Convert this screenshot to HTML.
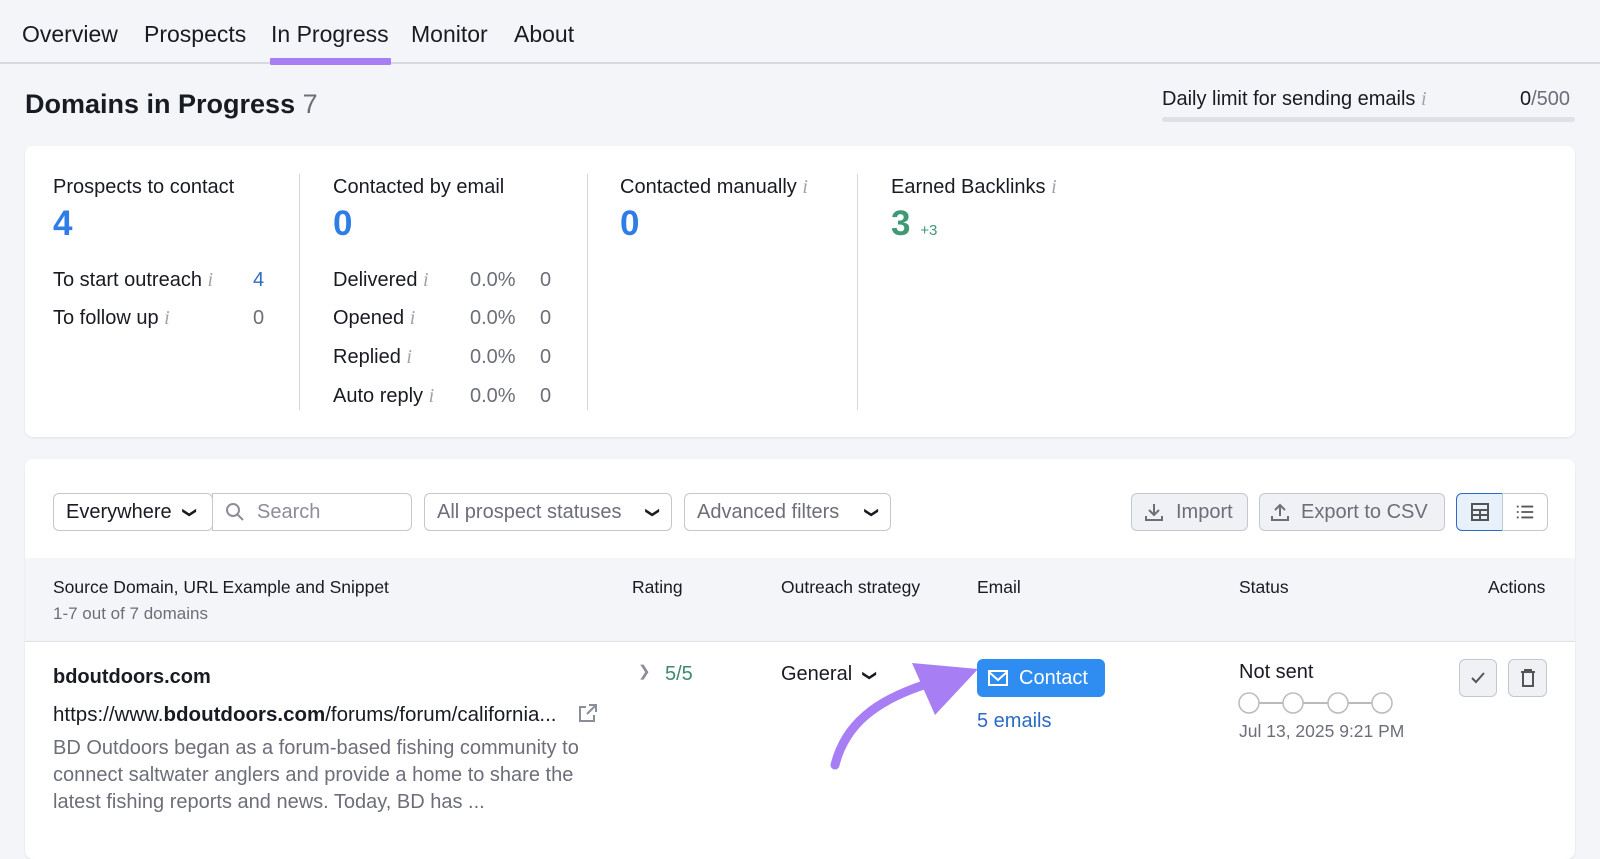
<!DOCTYPE html><html><head><style>
*{box-sizing:border-box;margin:0;padding:0}
body{width:1600px;height:832px;overflow:hidden;background:#f4f5f9;font-family:"Liberation Sans",sans-serif;color:#191b23;position:relative}
.a{position:absolute;white-space:nowrap}
.card{position:absolute;background:#fff;border-radius:8px;box-shadow:0 1px 2px rgba(0,0,0,.08)}
.i{color:#a0a3ad;font-style:italic;font-family:"Liberation Serif",serif;font-size:20px}
.btn{position:absolute;white-space:nowrap;border:1px solid #c4c7cf;border-radius:6px;background:#fff;height:38px;font-size:20px;color:#6c6e79;display:flex;align-items:center;padding:0 12px}
.gb{background:#f0f1f5}
.vl{position:absolute;width:1px;background:#d5d7de}
.f18{font-size:20px}
.t{font-size:23px;top:21px}
.dn{display:inline-block;transform:rotate(90deg);font-size:14px}
</style></head><body>
<div class="a t" style="left:22px">Overview</div>
<div class="a t" style="left:144px">Prospects</div>
<div class="a t" style="left:271px">In Progress</div>
<div class="a t" style="left:411px">Monitor</div>
<div class="a t" style="left:514px">About</div>
<div class="a" style="left:0;top:62px;width:1600px;height:2px;background:#d8dae0"></div>
<div class="a" style="left:270px;top:58px;width:121px;height:7px;background:#a77ef3;border-radius:1px"></div>
<div class="a" style="left:25px;top:89px;font-size:27px;font-weight:bold">Domains in Progress <span style="font-weight:normal;color:#6c6e79">7</span></div>
<div class="a" style="left:1162px;top:88px;font-size:20px">Daily limit for sending emails <span class="i">i</span></div>
<div class="a" style="left:1520px;top:88px;font-size:20px">0<span style="color:#6c6e79">/500</span></div>
<div class="a" style="left:1162px;top:117px;width:413px;height:5px;background:#e0e1e6;border-radius:3px"></div>

<div class="card" style="left:25px;top:146px;width:1550px;height:291px"></div>
<div class="vl" style="left:299px;top:174px;height:236px"></div>
<div class="vl" style="left:587px;top:174px;height:236px"></div>
<div class="vl" style="left:857px;top:174px;height:236px"></div>
<div class="a f18" style="left:53px;top:176px">Prospects to contact</div>
<div class="a" style="left:53px;top:204px;font-size:35px;font-weight:bold;color:#2f7ee8">4</div>
<div class="a f18" style="left:53px;top:269px">To start outreach <span class="i">i</span></div>
<div class="a f18" style="left:253px;top:269px;color:#2a6bc4">4</div>
<div class="a f18" style="left:53px;top:307px">To follow up <span class="i">i</span></div>
<div class="a f18" style="left:253px;top:307px;color:#6c6e79">0</div>
<div class="a f18" style="left:333px;top:176px">Contacted by email</div>
<div class="a" style="left:333px;top:204px;font-size:35px;font-weight:bold;color:#2f7ee8">0</div>
<div class="a f18" style="left:333px;top:269px">Delivered <span class="i">i</span></div>
<div class="a f18" style="left:333px;top:307px">Opened <span class="i">i</span></div>
<div class="a f18" style="left:333px;top:346px">Replied <span class="i">i</span></div>
<div class="a f18" style="left:333px;top:385px">Auto reply <span class="i">i</span></div>
<div class="a f18" style="left:470px;top:269px;color:#6c6e79">0.0%</div>
<div class="a f18" style="left:470px;top:307px;color:#6c6e79">0.0%</div>
<div class="a f18" style="left:470px;top:346px;color:#6c6e79">0.0%</div>
<div class="a f18" style="left:470px;top:385px;color:#6c6e79">0.0%</div>
<div class="a f18" style="left:540px;top:269px;color:#6c6e79">0</div>
<div class="a f18" style="left:540px;top:307px;color:#6c6e79">0</div>
<div class="a f18" style="left:540px;top:346px;color:#6c6e79">0</div>
<div class="a f18" style="left:540px;top:385px;color:#6c6e79">0</div>
<div class="a f18" style="left:620px;top:176px">Contacted manually <span class="i">i</span></div>
<div class="a" style="left:620px;top:204px;font-size:35px;font-weight:bold;color:#2f7ee8">0</div>
<div class="a f18" style="left:891px;top:176px">Earned Backlinks <span class="i">i</span></div>
<div class="a" style="left:891px;top:204px;font-size:35px;font-weight:bold;color:#3f9a73">3 <span style="font-size:15px;font-weight:normal">+3</span></div>

<div class="card" style="left:25px;top:459px;width:1550px;height:400px"></div>
<div class="btn" style="left:53px;top:493px;width:160px;color:#191b23">Everywhere <span class="dn" style="margin-left:12px">&#10095;</span></div>
<div class="btn" style="left:212px;top:493px;width:200px;border-radius:0 6px 6px 0;color:#8b8e99"><svg width="20" height="20" viewBox="0 0 20 20" style="margin-right:12px"><circle cx="8" cy="8" r="6" fill="none" stroke="#8b8e99" stroke-width="2"/><path d="M12.5 12.5L18 18" stroke="#8b8e99" stroke-width="2"/></svg>Search</div>
<div class="btn" style="left:424px;top:493px;width:248px;justify-content:space-between">All prospect statuses <span class="dn" style="color:#191b23">&#10095;</span></div>
<div class="btn" style="left:684px;top:493px;width:207px;justify-content:space-between">Advanced filters <span class="dn" style="color:#191b23">&#10095;</span></div>
<div class="btn gb" style="left:1131px;top:493px;width:117px"><svg width="20" height="20" viewBox="0 0 20 20" style="margin-right:12px"><path d="M10 2v11M5 8l5 5 5-5M2 14v4h16v-4" fill="none" stroke="#6c6e79" stroke-width="2"/></svg>Import</div>
<div class="btn gb" style="left:1259px;top:493px;width:186px;padding:0 10px"><svg width="20" height="20" viewBox="0 0 20 20" style="margin-right:11px;flex:none"><path d="M10 14V3M5 8l5-5 5 5M2 14v4h16v-4" fill="none" stroke="#6c6e79" stroke-width="2"/></svg>Export to CSV</div>
<div class="btn" style="left:1456px;top:493px;width:47px;background:#e8f0fb;border-color:#2a6bc4;border-radius:6px 0 0 6px;justify-content:center"><svg width="20" height="20" viewBox="0 0 20 20"><rect x="2" y="2" width="16" height="16" fill="none" stroke="#555" stroke-width="2"/><path d="M2 8h16M2 13h16M10 8v10" stroke="#555" stroke-width="2"/></svg></div>
<div class="btn" style="left:1502px;top:493px;width:46px;border-radius:0 6px 6px 0;justify-content:center"><svg width="22" height="20" viewBox="0 0 22 20"><path d="M2 4h2M2 10h2M2 16h2M7 4h13M7 10h13M7 16h13" stroke="#555" stroke-width="2"/></svg></div>

<div class="a" style="left:25px;top:558px;width:1550px;height:84px;background:#f4f5f9;border-bottom:1px solid #e0e1e6"></div>
<div class="a" style="left:53px;top:577px;font-size:17.5px">Source Domain, URL Example and Snippet</div>
<div class="a" style="left:53px;top:604px;font-size:17px;color:#6c6e79">1-7 out of 7 domains</div>
<div class="a" style="left:632px;top:577px;font-size:17.5px">Rating</div>
<div class="a" style="left:781px;top:577px;font-size:17.5px">Outreach strategy</div>
<div class="a" style="left:977px;top:577px;font-size:17.5px">Email</div>
<div class="a" style="left:1239px;top:577px;font-size:17.5px">Status</div>
<div class="a" style="left:1488px;top:577px;font-size:17.5px">Actions</div>

<div class="a" style="left:53px;top:666px;font-size:20px;font-weight:bold">bdoutdoors.com</div>
<div class="a" style="left:53px;top:703px;font-size:20.5px">https://www.<b>bdoutdoors.com</b>/forums/forum/california...</div>
<svg class="a" style="left:578px;top:703px" width="20" height="20" viewBox="0 0 20 20"><path d="M11 2h7v7M18 2l-9 9M8 4H2v14h14v-6" fill="none" stroke="#8b8e99" stroke-width="2"/></svg>
<div class="a" style="left:53px;top:735px;font-size:20px;color:#6c6e79;line-height:27px">BD Outdoors began as a forum-based fishing community to<br>connect saltwater anglers and provide a home to share the<br>latest fishing reports and news. Today, BD has ...</div>
<div class="a" style="left:638px;top:662px;font-size:15px;color:#8b8e99">&#10095;</div>
<div class="a" style="left:665px;top:663px;font-size:20px;color:#3f8a6d">5/5</div>
<div class="a" style="left:781px;top:663px;font-size:20px">General <span class="dn" style="margin-left:6px">&#10095;</span></div>
<div class="a" style="left:977px;top:659px;width:128px;height:38px;background:#2f8cf0;border-radius:6px;color:#fff;font-size:20px;display:flex;align-items:center;padding-left:10px"><svg width="22" height="20" viewBox="0 0 22 20" style="margin-right:10px"><rect x="2" y="3" width="18" height="14" fill="none" stroke="#fff" stroke-width="2"/><path d="M2 4l9 8 9-8" fill="none" stroke="#fff" stroke-width="2"/></svg>Contact</div>
<div class="a" style="left:977px;top:710px;font-size:20px;color:#2a6bc4">5 emails</div>
<div class="a" style="left:1239px;top:661px;font-size:20px">Not sent</div>
<svg class="a" style="left:1236px;top:690px" width="160" height="26"><path d="M23 13h24M67 13h25M112 13h24" stroke="#bbb" stroke-width="2"/><g fill="#fff" stroke="#bbb" stroke-width="1.5"><circle cx="13" cy="13" r="10"/><circle cx="57" cy="13" r="10"/><circle cx="102" cy="13" r="10"/><circle cx="146" cy="13" r="10"/></g></svg>
<div class="a" style="left:1239px;top:721px;font-size:17.5px;color:#6c6e79">Jul 13, 2025 9:21 PM</div>
<div class="btn gb" style="left:1459px;top:659px;width:38px;justify-content:center;padding:0"><svg width="16" height="14" viewBox="0 0 16 14"><path d="M2 7l4 4 8-9" fill="none" stroke="#555" stroke-width="2"/></svg></div>
<div class="btn gb" style="left:1508px;top:659px;width:39px;justify-content:center;padding:0"><svg width="16" height="20" viewBox="0 0 16 20"><path d="M1 4h14M5 4V2h6v2M3 4v14h10V4" fill="none" stroke="#555" stroke-width="2"/></svg></div>
<svg class="a" style="left:820px;top:655px" width="170" height="120"><path d="M15 110C25 70 55 45 110 28" fill="none" stroke="#a77ef3" stroke-width="9" stroke-linecap="round"/><path d="M92 8L158 14L115 60Z" fill="#a77ef3"/></svg>
</body></html>
